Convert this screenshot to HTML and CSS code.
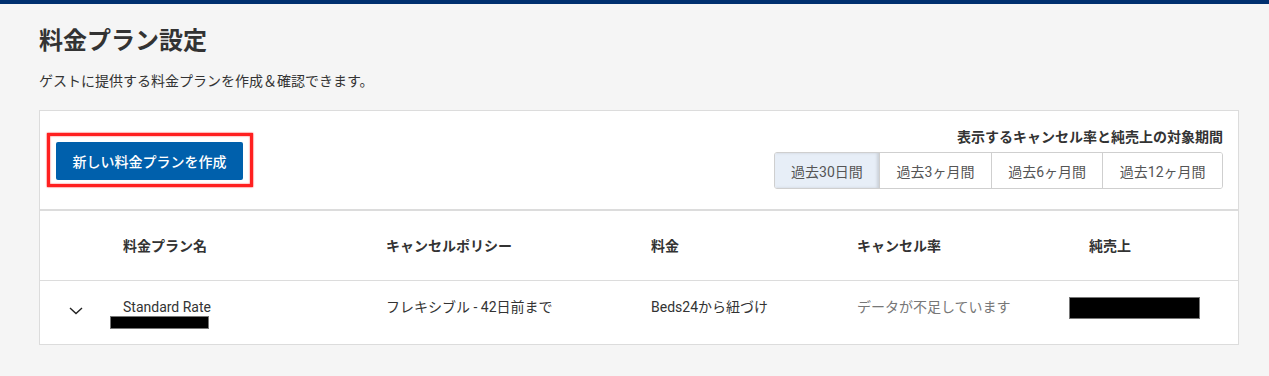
FILE: index.html
```html
<!DOCTYPE html>
<html lang="ja">
<head>
<meta charset="utf-8">
<title>料金プラン設定</title>
<link rel="stylesheet" href="styles.css">
</head>
<body>
<div class="topbar"></div>
<main class="page">
  <h1 class="title">料金プラン設定</h1>
  <p class="lead">ゲストに提供する料金プランを作成＆確認できます。</p>

  <section class="toolbar">
    <div class="create-wrap">
      <button class="btn-primary">新しい料金プランを作成</button>
    </div>
    <div class="period">
      <div class="period-label">表示するキャンセル率と純売上の対象期間</div>
      <div class="segmented">
        <button class="seg active">過去30日間</button>
        <button class="seg">過去3ヶ月間</button>
        <button class="seg">過去6ヶ月間</button>
        <button class="seg">過去12ヶ月間</button>
      </div>
    </div>
  </section>

  <section class="table">
    <div class="row head">
      <div class="cell"></div>
      <div class="cell">料金プラン名</div>
      <div class="cell">キャンセルポリシー</div>
      <div class="cell">料金</div>
      <div class="cell">キャンセル率</div>
      <div class="cell sales-head">純売上</div>
    </div>
    <div class="row body">
      <div class="cell toggle">
        <svg width="14" height="8" viewBox="0 0 14 8"><polyline points="1,1 7,6.5 13,1" fill="none" stroke="#222" stroke-width="1.4"/></svg>
      </div>
      <div class="cell name">
        <div>Standard Rate</div>
        <div class="redact small"></div>
      </div>
      <div class="cell">フレキシブル - 42日前まで</div>
      <div class="cell">Beds24から紐づけ</div>
      <div class="cell muted">データが不足しています</div>
      <div class="cell sales"><div class="redact big"></div></div>
    </div>
  </section>
</main>
</body>
</html>
```

FILE: styles.css
```css
* { box-sizing: border-box; }

html, body {
  margin: 0;
  padding: 0;
  background: #f5f5f5;
  font-family: Roboto, "Noto Sans CJK JP", sans-serif;
  color: #333;
}

.topbar {
  height: 4px;
  background: #00306f;
}

.page {
  width: 1200px;
  margin-left: 39px;
  padding-top: 19px;
}

.title {
  margin: 0;
  font-size: 24px;
  line-height: 36px;
  font-weight: 700;
  color: #333;
}

.lead {
  margin: 12px 0 19px;
  font-size: 14px;
  line-height: 20px;
  color: #333;
}

.toolbar {
  display: flex;
  justify-content: space-between;
  align-items: flex-start;
  background: #fff;
  border: 1px solid #dcdcdc;
  padding: 16px 15px 20px 16px;
}

.create-wrap {
  position: relative;
  margin-top: 15px;
}

.create-wrap::after {
  content: "";
  position: absolute;
  top: -9px;
  left: -9px;
  right: -10px;
  bottom: -7px;
  border: 3px solid #ff2020;
  box-shadow: 0 0 1.5px #ff0000, inset 0 0 1.5px #ff0000;
  pointer-events: none;
}

.btn-primary {
  display: block;
  width: 187px;
  height: 38px;
  border: 0;
  border-radius: 2px;
  background: #0060ac;
  color: #fff;
  font-family: inherit;
  font-size: 14px;
  font-weight: 500;
  padding: 0;
}

.period {
  display: flex;
  flex-direction: column;
  align-items: flex-end;
}

.period-label {
  font-size: 14px;
  line-height: 20px;
  font-weight: 700;
  color: #333;
}

.segmented {
  display: flex;
  margin-top: 5px;
  border: 1px solid #cfcfcf;
  border-radius: 3px;
  overflow: hidden;
}

.seg {
  height: 35px;
  padding: 0 16.4px;
  border: 0;
  border-left: 1px solid #cfcfcf;
  background: #fff;
  color: #555;
  font-family: inherit;
  font-size: 14px;
}

.seg:first-child { border-left: 0; }

.seg.active {
  background: #e7eef7;
  box-shadow: inset -2px 0 3px rgba(0, 0, 0, 0.12);
}

.table {
  background: #fff;
  border: 1px solid #dcdcdc;
}

.row {
  display: grid;
  grid-template-columns: 83px 263px 265px 206px 212px 1fr;
}

.row.head {
  height: 70px;
  align-items: center;
  border-bottom: 1px solid #dcdcdc;
  font-size: 14px;
  font-weight: 700;
  line-height: 20px;
}

.sales-head { padding-left: 20px; }

.row.body {
  padding: 16px 0 15px;
  font-size: 14px;
  line-height: 20px;
  align-items: start;
}

.toggle {
  padding: 10px 0 0 29px;
}

.toggle svg { display: block; }

.muted { color: #777; }

.redact {
  background: #000;
  border: 1px solid #777;
}

.redact.small {
  width: 99px;
  height: 13px;
  margin-left: -13px;
  margin-top: -1px;
}

.redact.big {
  width: 131px;
  height: 22px;
}
```
